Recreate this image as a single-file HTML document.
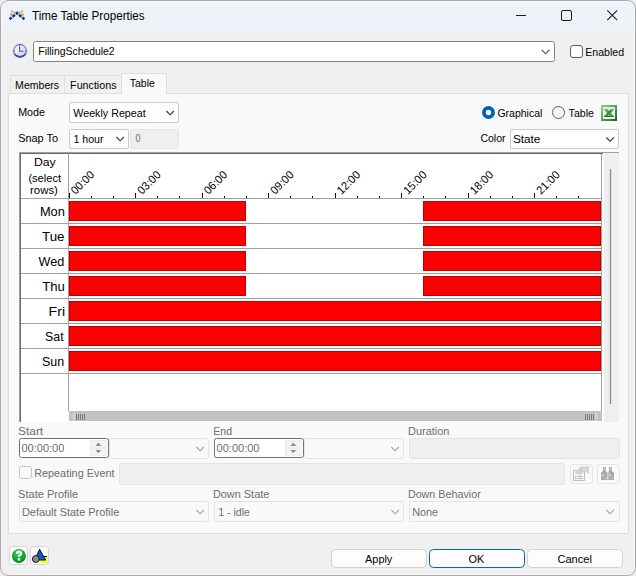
<!DOCTYPE html><html><head><meta charset="utf-8"><style>html,body{margin:0;padding:0;background:#ececec;width:636px;height:576px;overflow:hidden}svg{display:block}text{font-family:"Liberation Sans",sans-serif;}</style></head><body>
<svg width="636" height="576" viewBox="0 0 636 576">
<defs><clipPath id="win"><rect x="0" y="0" width="636" height="576" rx="8"/></clipPath><radialGradient id="gq" cx="0.45" cy="0.3" r="0.75"><stop offset="0" stop-color="#3ad85a"/><stop offset="0.6" stop-color="#13a82e"/><stop offset="1" stop-color="#0b7a1e"/></radialGradient><linearGradient id="gclock" x1="0" y1="0" x2="1" y2="1"><stop offset="0" stop-color="#ffffff"/><stop offset="1" stop-color="#c4ccf4"/></linearGradient></defs>
<rect x="0" y="0" width="636" height="576" fill="#ececec"/>
<g clip-path="url(#win)"><rect x="0" y="0" width="636" height="576" fill="#f0f0f0"/><rect x="0" y="0" width="636" height="31" fill="#eef3f9"/></g>
<rect x="1.5" y="1.5" width="633" height="573" rx="7" fill="none" stroke="#ffffff" stroke-opacity="0.35"/>
<rect x="0.5" y="0.5" width="635" height="575" rx="8" fill="none" stroke="#a8a8a8"/>
<path d="M9.6 19.2 L17 13 L24.4 19.2" fill="none" stroke="#0b3b7e" stroke-width="2.5" stroke-dasharray="3.1 1.1" stroke-dashoffset="0.3"/>
<path d="M10.2 15.2 L12.8 13.0 M11.2 11.0 L15.6 12.9 M23.8 15.2 L21.2 13.0 M22.8 11.0 L18.4 12.9" fill="none" stroke="#c9a063" stroke-width="1.9" stroke-dasharray="2.2 0.8"/>
<text x="32.00" y="20" font-size="12" fill="#000" textLength="112.66" lengthAdjust="spacingAndGlyphs">Time Table Properties</text>
<rect x="516" y="15" width="10" height="1" fill="#1a1a1a" />
<rect x="561.5" y="10.5" width="10" height="10" fill="none" stroke="#1a1a1a" stroke-width="1" rx="1.5"/>
<path d="M607.3 10.3 L617.2 20.2 M617.2 10.3 L607.3 20.2" stroke="#1a1a1a" stroke-width="1.05"/>
<circle cx="20" cy="50.9" r="6.5" fill="url(#gclock)" stroke="#7878cc" stroke-width="1.1"/>
<path d="M14.5 53.6 A6.5 6.5 0 0 0 25.5 53.6" fill="none" stroke="#45459a" stroke-width="1.1"/>
<path d="M20 44.6 v1.3 M20 56 v1.4 M13.6 50.9 h1.3 M25.1 50.9 h1.3" stroke="#404090" stroke-width="1"/>
<path d="M19.6 46.2 V51.2 H23.4" fill="none" stroke="#5050a8" stroke-width="1.05"/>
<rect x="33.5" y="41.5" width="521" height="20" fill="#fff" stroke="#838383" stroke-width="1" rx="2"/>
<text x="38.35" y="55" font-size="10.8" fill="#000" textLength="76.29" lengthAdjust="spacingAndGlyphs">FillingSchedule2</text>
<path d="M541.9 50.0 L545.6 53.8 L549.3 50.0" fill="none" stroke="#505050" stroke-width="1.1"/>
<rect x="570.5" y="45.5" width="12" height="12" fill="#fdfdfd" stroke="#5c5c5c" stroke-width="1" rx="2.5"/>
<text x="585.30" y="55.7" font-size="10.8" fill="#000" textLength="38.79" lengthAdjust="spacingAndGlyphs">Enabled</text>
<rect x="8.5" y="93.5" width="620" height="440" fill="#f9f9f9" stroke="#dedede" stroke-width="1" rx="0"/>
<rect x="10.5" y="75.5" width="54" height="18" fill="#f0f0f0" stroke="#dedede" stroke-width="1" rx="0"/>
<rect x="64.5" y="75.5" width="57" height="18" fill="#f0f0f0" stroke="#dedede" stroke-width="1" rx="0"/>
<rect x="121.5" y="73.5" width="45" height="20" fill="#f9f9f9" stroke="#dedede" stroke-width="1" rx="0"/>
<rect x="122" y="93" width="44" height="1" fill="#f9f9f9" />
<text x="15.10" y="89" font-size="10.8" fill="#000" textLength="43.99" lengthAdjust="spacingAndGlyphs">Members</text>
<text x="70.10" y="89" font-size="10.8" fill="#000" textLength="46.41" lengthAdjust="spacingAndGlyphs">Functions</text>
<text x="129.70" y="86.8" font-size="10.8" fill="#000" textLength="25.19" lengthAdjust="spacingAndGlyphs">Table</text>
<text x="18.20" y="116.2" font-size="10.8" fill="#000" textLength="26.81" lengthAdjust="spacingAndGlyphs">Mode</text>
<rect x="69.5" y="102.5" width="109" height="20" fill="#fff" stroke="#cbcbcb" stroke-width="1" rx="1.5"/>
<text x="73.30" y="117" font-size="10.8" fill="#000" textLength="72.43" lengthAdjust="spacingAndGlyphs">Weekly Repeat</text>
<path d="M166.4 111.0 L170.1 114.8 L173.8 111.0" fill="none" stroke="#303030" stroke-width="1.1"/>
<text x="18.20" y="142" font-size="10.8" fill="#000" textLength="39.86" lengthAdjust="spacingAndGlyphs">Snap To</text>
<rect x="69.5" y="129.5" width="59" height="19" fill="#fff" stroke="#cbcbcb" stroke-width="1" rx="1.5"/>
<text x="73.50" y="142.8" font-size="10.8" fill="#000" textLength="30.0" lengthAdjust="spacingAndGlyphs">1 hour</text>
<path d="M116.4 137.0 L120.10000000000001 140.8 L123.80000000000001 137.0" fill="none" stroke="#303030" stroke-width="1.1"/>
<rect x="130.5" y="129.5" width="48" height="19" fill="#efefef" stroke="#e6e6e6" stroke-width="1" rx="2"/>
<text x="135.40" y="142.2" font-size="10.8" fill="#6d6d6d" textLength="5.01" lengthAdjust="spacingAndGlyphs">0</text>
<circle cx="488.5" cy="112.5" r="6.5" fill="#005fb8"/>
<circle cx="488.5" cy="112.5" r="2.7" fill="#fff"/>
<text x="497.40" y="117" font-size="10.8" fill="#000" textLength="44.99" lengthAdjust="spacingAndGlyphs">Graphical</text>
<circle cx="558.5" cy="112.5" r="6" fill="#f6f6f6" stroke="#5f5f5f" stroke-width="1"/>
<text x="568.60" y="117" font-size="10.8" fill="#000" textLength="25.41" lengthAdjust="spacingAndGlyphs">Table</text>
<defs><linearGradient id="gxl" x1="0" y1="0" x2="1" y2="1"><stop offset="0" stop-color="#9ccc9c"/><stop offset="0.5" stop-color="#5a9e5a"/><stop offset="1" stop-color="#1f5a1f"/></linearGradient></defs>
<rect x="601" y="105" width="16" height="16" fill="url(#gxl)" />
<rect x="603" y="107" width="12" height="12" fill="#f2f9f2" />
<rect x="603" y="107" width="12" height="2" fill="#d8ecd8" />
<path d="M603.6 109.2 H607.6 L614.2 116.4 H610.2 Z" fill="#4fa84f"/>
<path d="M610.6 109.2 H614.2 L607.6 116.6 H603.8 Z" fill="#3b923b"/>
<rect x="604" y="116" width="10" height="1" fill="#2a6e2a" />
<text x="480.40" y="142.2" font-size="10.8" fill="#000" textLength="25.21" lengthAdjust="spacingAndGlyphs">Color</text>
<rect x="510.5" y="129.5" width="108" height="19" fill="#fff" stroke="#cbcbcb" stroke-width="1" rx="1.5"/>
<text x="512.90" y="142.8" font-size="10.8" fill="#000" textLength="27.55" lengthAdjust="spacingAndGlyphs">State</text>
<path d="M606.4 137.5 L610.1 141.3 L613.8 137.5" fill="none" stroke="#303030" stroke-width="1.1"/>
<rect x="19" y="152" width="600" height="270" fill="#fff" />
<rect x="19" y="152" width="600" height="1" fill="#a0a0a0" />
<rect x="19" y="152" width="1" height="270" fill="#a0a0a0" />
<rect x="20" y="153" width="583" height="1" fill="#696969" />
<rect x="20" y="153" width="1" height="269" fill="#696969" />
<rect x="604" y="153" width="15" height="269" fill="#efefef" />
<rect x="610" y="169" width="1" height="235" fill="#8a8a8a" />
<rect x="609.6" y="169" width="1.8" height="235" fill="#8a8a8a" fill-opacity="0.35"/>
<rect x="68" y="154" width="1" height="257" fill="#a0a0a0" />
<rect x="601" y="154" width="1" height="257" fill="#a0a0a0" />
<rect x="21" y="198" width="580" height="1" fill="#a0a0a0" />
<rect x="21" y="223" width="580" height="1" fill="#a0a0a0" />
<rect x="21" y="248" width="580" height="1" fill="#a0a0a0" />
<rect x="21" y="273" width="580" height="1" fill="#a0a0a0" />
<rect x="21" y="298" width="580" height="1" fill="#a0a0a0" />
<rect x="21" y="323" width="580" height="1" fill="#a0a0a0" />
<rect x="21" y="348" width="580" height="1" fill="#a0a0a0" />
<rect x="21" y="373" width="580" height="1" fill="#a0a0a0" />
<rect x="69" y="193" width="1" height="5" fill="#000" />
<rect x="91" y="196" width="1" height="2" fill="#000" />
<rect x="113" y="196" width="1" height="2" fill="#000" />
<rect x="135" y="193" width="1" height="5" fill="#000" />
<rect x="157" y="196" width="1" height="2" fill="#000" />
<rect x="179" y="196" width="1" height="2" fill="#000" />
<rect x="202" y="193" width="1" height="5" fill="#000" />
<rect x="224" y="196" width="1" height="2" fill="#000" />
<rect x="246" y="196" width="1" height="2" fill="#000" />
<rect x="268" y="193" width="1" height="5" fill="#000" />
<rect x="290" y="196" width="1" height="2" fill="#000" />
<rect x="312" y="196" width="1" height="2" fill="#000" />
<rect x="335" y="193" width="1" height="5" fill="#000" />
<rect x="357" y="196" width="1" height="2" fill="#000" />
<rect x="379" y="196" width="1" height="2" fill="#000" />
<rect x="401" y="193" width="1" height="5" fill="#000" />
<rect x="423" y="196" width="1" height="2" fill="#000" />
<rect x="445" y="196" width="1" height="2" fill="#000" />
<rect x="468" y="193" width="1" height="5" fill="#000" />
<rect x="490" y="196" width="1" height="2" fill="#000" />
<rect x="512" y="196" width="1" height="2" fill="#000" />
<rect x="534" y="193" width="1" height="5" fill="#000" />
<rect x="556" y="196" width="1" height="2" fill="#000" />
<rect x="578" y="196" width="1" height="2" fill="#000" />
<text x="0" y="0" font-size="11.5" fill="#000" textLength="27.6" lengthAdjust="spacingAndGlyphs" transform="translate(75.50,195) rotate(-45)">00:00</text>
<text x="0" y="0" font-size="11.5" fill="#000" textLength="27.6" lengthAdjust="spacingAndGlyphs" transform="translate(142.00,195) rotate(-45)">03:00</text>
<text x="0" y="0" font-size="11.5" fill="#000" textLength="27.6" lengthAdjust="spacingAndGlyphs" transform="translate(208.50,195) rotate(-45)">06:00</text>
<text x="0" y="0" font-size="11.5" fill="#000" textLength="27.6" lengthAdjust="spacingAndGlyphs" transform="translate(275.00,195) rotate(-45)">09:00</text>
<text x="0" y="0" font-size="11.5" fill="#000" textLength="27.6" lengthAdjust="spacingAndGlyphs" transform="translate(341.50,195) rotate(-45)">12:00</text>
<text x="0" y="0" font-size="11.5" fill="#000" textLength="27.6" lengthAdjust="spacingAndGlyphs" transform="translate(408.00,195) rotate(-45)">15:00</text>
<text x="0" y="0" font-size="11.5" fill="#000" textLength="27.6" lengthAdjust="spacingAndGlyphs" transform="translate(474.50,195) rotate(-45)">18:00</text>
<text x="0" y="0" font-size="11.5" fill="#000" textLength="27.6" lengthAdjust="spacingAndGlyphs" transform="translate(541.00,195) rotate(-45)">21:00</text>
<text x="39.90" y="215.8" font-size="12.4" fill="#000" textLength="24.99" lengthAdjust="spacingAndGlyphs">Mon</text>
<text x="42.00" y="240.8" font-size="12.4" fill="#000" textLength="22.58" lengthAdjust="spacingAndGlyphs">Tue</text>
<text x="38.60" y="265.8" font-size="12.4" fill="#000" textLength="25.71" lengthAdjust="spacingAndGlyphs">Wed</text>
<text x="42.20" y="290.8" font-size="12.4" fill="#000" textLength="22.6" lengthAdjust="spacingAndGlyphs">Thu</text>
<text x="48.60" y="315.8" font-size="12.4" fill="#000" textLength="16.47" lengthAdjust="spacingAndGlyphs">Fri</text>
<text x="45.00" y="340.8" font-size="12.4" fill="#000" textLength="18.61" lengthAdjust="spacingAndGlyphs">Sat</text>
<text x="42.00" y="365.8" font-size="12.4" fill="#000" textLength="22.1" lengthAdjust="spacingAndGlyphs">Sun</text>
<text x="33.90" y="165.8" font-size="11.5" fill="#000" textLength="21.75" lengthAdjust="spacingAndGlyphs">Day</text>
<text x="28.40" y="181.5" font-size="11.5" fill="#000" textLength="32.65" lengthAdjust="spacingAndGlyphs">(select</text>
<text x="30.00" y="194.1" font-size="11.5" fill="#000" textLength="27.93" lengthAdjust="spacingAndGlyphs">rows)</text>
<rect x="69" y="201" width="177" height="20" fill="#ff0000" />
<rect x="69.5" y="201.5" width="176" height="19" fill="none" stroke="#a80000" stroke-width="1" stroke-opacity="0.75"/>
<rect x="423" y="201" width="178" height="20" fill="#ff0000" />
<rect x="423.5" y="201.5" width="177" height="19" fill="none" stroke="#a80000" stroke-width="1" stroke-opacity="0.75"/>
<rect x="69" y="226" width="177" height="20" fill="#ff0000" />
<rect x="69.5" y="226.5" width="176" height="19" fill="none" stroke="#a80000" stroke-width="1" stroke-opacity="0.75"/>
<rect x="423" y="226" width="178" height="20" fill="#ff0000" />
<rect x="423.5" y="226.5" width="177" height="19" fill="none" stroke="#a80000" stroke-width="1" stroke-opacity="0.75"/>
<rect x="69" y="251" width="177" height="20" fill="#ff0000" />
<rect x="69.5" y="251.5" width="176" height="19" fill="none" stroke="#a80000" stroke-width="1" stroke-opacity="0.75"/>
<rect x="423" y="251" width="178" height="20" fill="#ff0000" />
<rect x="423.5" y="251.5" width="177" height="19" fill="none" stroke="#a80000" stroke-width="1" stroke-opacity="0.75"/>
<rect x="69" y="276" width="177" height="20" fill="#ff0000" />
<rect x="69.5" y="276.5" width="176" height="19" fill="none" stroke="#a80000" stroke-width="1" stroke-opacity="0.75"/>
<rect x="423" y="276" width="178" height="20" fill="#ff0000" />
<rect x="423.5" y="276.5" width="177" height="19" fill="none" stroke="#a80000" stroke-width="1" stroke-opacity="0.75"/>
<rect x="69" y="301" width="532" height="20" fill="#ff0000" />
<rect x="69.5" y="301.5" width="531" height="19" fill="none" stroke="#a80000" stroke-width="1" stroke-opacity="0.75"/>
<rect x="69" y="326" width="532" height="20" fill="#ff0000" />
<rect x="69.5" y="326.5" width="531" height="19" fill="none" stroke="#a80000" stroke-width="1" stroke-opacity="0.75"/>
<rect x="69" y="351" width="532" height="20" fill="#ff0000" />
<rect x="69.5" y="351.5" width="531" height="19" fill="none" stroke="#a80000" stroke-width="1" stroke-opacity="0.75"/>
<path d="M69 411 H602 V421 H69 Z" fill="#c2c2c2"/>
<path d="M75 411.5 A5 5 0 0 0 75 420.5" fill="#d4d4d4"/>
<rect x="76" y="414" width="1" height="6" fill="#7a7a7a" />
<rect x="78" y="414" width="1" height="6" fill="#7a7a7a" />
<rect x="80" y="414" width="1" height="6" fill="#7a7a7a" />
<rect x="82" y="414" width="1" height="6" fill="#7a7a7a" />
<rect x="84" y="414" width="1" height="6" fill="#7a7a7a" />
<rect x="585" y="414" width="1" height="6" fill="#7a7a7a" />
<rect x="587" y="414" width="1" height="6" fill="#7a7a7a" />
<rect x="589" y="414" width="1" height="6" fill="#7a7a7a" />
<rect x="591" y="414" width="1" height="6" fill="#7a7a7a" />
<rect x="593" y="414" width="1" height="6" fill="#7a7a7a" />
<path d="M595 411.5 A5 5 0 0 1 595 420.5" fill="#d4d4d4"/>
<text x="18.10" y="435" font-size="10.8" fill="#6d6d6d" textLength="25.09" lengthAdjust="spacingAndGlyphs">Start</text>
<rect x="19.5" y="438.5" width="89" height="19" fill="#fff" stroke="#727272" stroke-width="1" rx="2"/>
<text x="21.50" y="452" font-size="10.8" fill="#6d6d6d" textLength="42.83" lengthAdjust="spacingAndGlyphs">00:00:00</text>
<rect x="90" y="440" width="17" height="16" fill="#ededed" />
<rect x="91" y="441" width="15" height="6" fill="#f4f4f4" />
<rect x="91" y="449" width="15" height="6" fill="#f4f4f4" />
<path d="M95.5 446 L98.3 442.6 L101.1 446 Z" fill="#8c8c8c"/>
<path d="M95.5 450 L98.3 453.3 L101.1 450 Z" fill="#8c8c8c"/>
<rect x="109.5" y="438.5" width="99" height="20" fill="#f9f9f9" stroke="#e4e4e4" stroke-width="1" rx="2"/>
<path d="M196.4 447.0 L200.1 450.8 L203.8 447.0" fill="none" stroke="#a0a0a0" stroke-width="1.1"/>
<text x="213.30" y="435" font-size="10.8" fill="#6d6d6d" textLength="18.8" lengthAdjust="spacingAndGlyphs">End</text>
<rect x="214.5" y="438.5" width="89" height="19" fill="#fff" stroke="#727272" stroke-width="1" rx="2"/>
<text x="216.60" y="452" font-size="10.8" fill="#6d6d6d" textLength="42.83" lengthAdjust="spacingAndGlyphs">00:00:00</text>
<rect x="285" y="440" width="17" height="16" fill="#ededed" />
<rect x="286" y="441" width="15" height="6" fill="#f4f4f4" />
<rect x="286" y="449" width="15" height="6" fill="#f4f4f4" />
<path d="M290.5 446 L293.3 442.6 L296.1 446 Z" fill="#8c8c8c"/>
<path d="M290.5 450 L293.3 453.3 L296.1 450 Z" fill="#8c8c8c"/>
<rect x="304.5" y="438.5" width="99" height="20" fill="#f9f9f9" stroke="#e4e4e4" stroke-width="1" rx="2"/>
<path d="M391.4 447.0 L395.09999999999997 450.8 L398.79999999999995 447.0" fill="none" stroke="#a0a0a0" stroke-width="1.1"/>
<text x="408.10" y="435" font-size="10.8" fill="#6d6d6d" textLength="41.25" lengthAdjust="spacingAndGlyphs">Duration</text>
<rect x="409.5" y="438.5" width="210" height="20" fill="#efefef" stroke="#e4e4e4" stroke-width="1" rx="2"/>
<rect x="19.5" y="466.5" width="12" height="12" fill="#fbfbfb" stroke="#c6c6c6" stroke-width="1" rx="2.5"/>
<text x="34.15" y="477" font-size="10.8" fill="#6d6d6d" textLength="80.35" lengthAdjust="spacingAndGlyphs">Repeating Event</text>
<rect x="119.5" y="463.5" width="445" height="21" fill="#efefef" stroke="#e4e4e4" stroke-width="1" rx="2"/>
<rect x="570.5" y="464.5" width="22" height="19" fill="#f9f9f9" stroke="#e4e4e4" stroke-width="1" rx="3"/>
<rect x="597.5" y="464.5" width="22" height="19" fill="#f9f9f9" stroke="#e4e4e4" stroke-width="1" rx="3"/>
<rect x="573.5" y="470.5" width="11" height="10" fill="#f4f4f4" stroke="#bdbdbd"/>
<path d="M575 476.5 h1.5 M577.5 476.5 h5 M575 478.5 h1.5 M577.5 478.5 h5" stroke="#b4b4b4"/>
<path d="M575 473 L580 467.5 L583 472 L580.5 475 Z" fill="#cfcfcf"/>
<path d="M580 467 H588.5 V473.5 L586.5 471.5 Q584 473 582 471.5 Z" fill="#d9d9d9" stroke="#c4c4c4" stroke-width="0.8"/>
<path d="M603 467 H605.8 V471 L607.5 472.8 V480 H601 V472.8 L603 471 Z" fill="#a9a9a9"/>
<path d="M609 467 H611.8 V471 L614 472.8 V480 H608.3 V472.8 L609 471 Z" fill="#a9a9a9"/>
<path d="M603.8 468 h1.2 v2 h-1.2 Z M609.8 468 h1.2 v2 h-1.2 Z M602.3 474 h1.3 v3 h-1.3 Z M609.6 474 h1.3 v3 h-1.3 Z M605 477.5 h1.3 v1.5 h-1.3 Z M612 477.5 h1.3 v1.5 h-1.3 Z" fill="#d2d2d2"/>
<text x="18.10" y="497.8" font-size="10.8" fill="#6d6d6d" textLength="60.06" lengthAdjust="spacingAndGlyphs">State Profile</text>
<rect x="19.5" y="501.5" width="189" height="20" fill="#f9f9f9" stroke="#e4e4e4" stroke-width="1" rx="2"/>
<text x="21.90" y="515.8" font-size="10.8" fill="#6d6d6d" textLength="97.44" lengthAdjust="spacingAndGlyphs">Default State Profile</text>
<path d="M196.4 510.0 L200.1 513.8 L203.8 510.0" fill="none" stroke="#a0a0a0" stroke-width="1.1"/>
<text x="212.90" y="497.8" font-size="10.8" fill="#6d6d6d" textLength="56.46" lengthAdjust="spacingAndGlyphs">Down State</text>
<rect x="214.5" y="501.5" width="189" height="20" fill="#f9f9f9" stroke="#e4e4e4" stroke-width="1" rx="2"/>
<text x="218.20" y="515.8" font-size="10.8" fill="#6d6d6d" textLength="31.8" lengthAdjust="spacingAndGlyphs">1 - idle</text>
<path d="M391.4 510.0 L395.09999999999997 513.8 L398.79999999999995 510.0" fill="none" stroke="#a0a0a0" stroke-width="1.1"/>
<text x="407.90" y="497.8" font-size="10.8" fill="#6d6d6d" textLength="72.82" lengthAdjust="spacingAndGlyphs">Down Behavior</text>
<rect x="409.5" y="501.5" width="210" height="20" fill="#f9f9f9" stroke="#e4e4e4" stroke-width="1" rx="2"/>
<text x="412.20" y="515.8" font-size="10.8" fill="#6d6d6d" textLength="25.81" lengthAdjust="spacingAndGlyphs">None</text>
<path d="M606.4 510.0 L610.1 513.8 L613.8 510.0" fill="none" stroke="#a0a0a0" stroke-width="1.1"/>
<rect x="9.5" y="546.5" width="18" height="18" fill="#fdfdfd" stroke="#d4d4d4" stroke-width="1" rx="3"/>
<circle cx="18.9" cy="556" r="7" fill="url(#gq)"/>
<path d="M16.9 553.9 Q16.9 551.6 19 551.6 Q21 551.6 21 553.4 Q21 554.6 19.8 555.2 Q18.9 555.7 18.9 557" fill="none" stroke="#fff" stroke-width="2.1"/>
<rect x="17.8" y="558.2" width="2.3" height="2.3" fill="#fff" />
<rect x="30.5" y="546.5" width="18" height="18" fill="#fdfdfd" stroke="#d4d4d4" stroke-width="1" rx="3"/>
<rect x="40.5" y="556.5" width="6.5" height="6.5" fill="#ffff00"/>
<path d="M40 556.5 H47" stroke="#000" stroke-width="1"/>
<path d="M39.6 549.2 L45.6 560 H34.6 Z" fill="#0a5ad0" stroke="#000" stroke-width="0.9"/>
<circle cx="35.8" cy="559" r="3.5" fill="#8a8a8a" stroke="#111" stroke-width="0.9"/>
<rect x="331.5" y="549.5" width="95" height="18" fill="#fdfdfd" stroke="#d0d0d0" stroke-width="1" rx="4"/>
<text x="365.10" y="563" font-size="10.8" fill="#000" textLength="27.23" lengthAdjust="spacingAndGlyphs">Apply</text>
<rect x="429.5" y="549.5" width="95" height="18" fill="#fdfdfd" stroke="#0a64b8" stroke-width="1" rx="4"/>
<text x="468.60" y="563" font-size="10.8" fill="#000" textLength="15.85" lengthAdjust="spacingAndGlyphs">OK</text>
<rect x="527.5" y="549.5" width="95" height="18" fill="#fdfdfd" stroke="#d0d0d0" stroke-width="1" rx="4"/>
<text x="557.40" y="563" font-size="10.8" fill="#000" textLength="34.46" lengthAdjust="spacingAndGlyphs">Cancel</text>
</svg></body></html>
